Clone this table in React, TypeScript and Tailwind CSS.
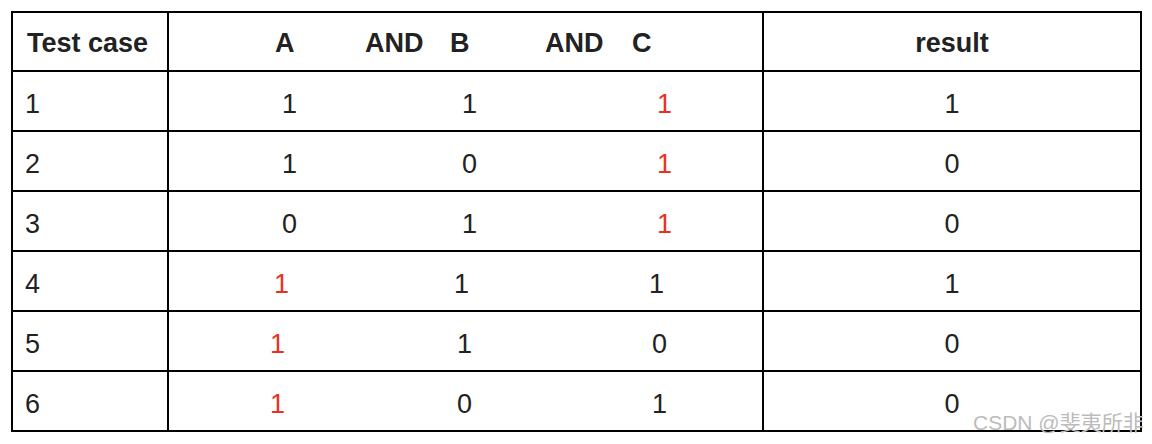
import React from 'react';

type Digit = { v: string; red?: boolean; w: number };

type Row = {
  id: string;
  lead: number;
  cells: Digit[];
  result: string;
};

// lead = offset of first digit inside the middle cell, w = distance to next digit
const rows: Row[] = [
  { id: '1', lead: 113, cells: [{ v: '1', w: 180 }, { v: '1', w: 195 }, { v: '1', red: true, w: 20 }], result: '1' },
  { id: '2', lead: 113, cells: [{ v: '1', w: 180 }, { v: '0', w: 195 }, { v: '1', red: true, w: 20 }], result: '0' },
  { id: '3', lead: 113, cells: [{ v: '0', w: 180 }, { v: '1', w: 195 }, { v: '1', red: true, w: 20 }], result: '0' },
  { id: '4', lead: 105, cells: [{ v: '1', red: true, w: 180 }, { v: '1', w: 195 }, { v: '1', w: 20 }], result: '1' },
  { id: '5', lead: 101, cells: [{ v: '1', red: true, w: 187 }, { v: '1', w: 195 }, { v: '0', w: 20 }], result: '0' },
  { id: '6', lead: 101, cells: [{ v: '1', red: true, w: 187 }, { v: '0', w: 195 }, { v: '1', w: 20 }], result: '0' },
];

const App = () => {
  return (
    <div
      className="relative w-[1152px] h-[444px] bg-white text-[#222] overflow-hidden"
      style={{ fontFamily: '"Liberation Sans", Arial, sans-serif' }}
    >
      <div className="pt-[11px] pl-[11px]">
        <div className="w-[1131px] border-t-2 border-l-2 border-black text-[27px]">
          {/* header */}
          <div className="flex">
            <div className="w-[156px] h-[59px] border-r-2 border-b-2 border-black flex items-center pt-[4px] pl-[14px] font-bold">
              Test case
            </div>
            <div className="w-[595px] h-[59px] border-r-2 border-b-2 border-black flex items-center pt-[4px] pl-[106px] font-bold">
              <span className="w-[90px] shrink-0">A</span>
              <span className="w-[85px] shrink-0">AND</span>
              <span className="w-[95px] shrink-0">B</span>
              <span className="w-[87px] shrink-0">AND</span>
              <span className="shrink-0">C</span>
            </div>
            <div className="w-[378px] h-[59px] border-r-2 border-b-2 border-black flex items-center justify-center pt-[4px] font-bold">
              result
            </div>
          </div>

          {rows.map((r) => (
            <div key={r.id} className="flex">
              <div className="w-[156px] h-[60px] border-r-2 border-b-2 border-black flex items-center pt-[6px] pl-[12px]">
                {r.id}
              </div>
              <div
                className="w-[595px] h-[60px] border-r-2 border-b-2 border-black flex items-center pt-[6px]"
                style={{ paddingLeft: r.lead }}
              >
                {r.cells.map((c, i) => (
                  <span
                    key={i}
                    className={`shrink-0 ${c.red ? 'text-[#e8321f]' : ''}`}
                    style={{ width: c.w }}
                  >
                    {c.v}
                  </span>
                ))}
              </div>
              <div className="w-[378px] h-[60px] border-r-2 border-b-2 border-black flex items-center justify-center pt-[6px]">
                {r.result}
              </div>
            </div>
          ))}
        </div>
      </div>

      {/* watermark */}
      <div
        className="absolute left-[973px] top-[412px] text-[21px] leading-[21px] text-[#bcbcbc] whitespace-nowrap"
        style={{ fontFamily: '"Liberation Sans", "Noto Sans CJK SC", sans-serif' }}
      >
        CSDN @斐夷所非
      </div>
    </div>
  );
};

export default App;
